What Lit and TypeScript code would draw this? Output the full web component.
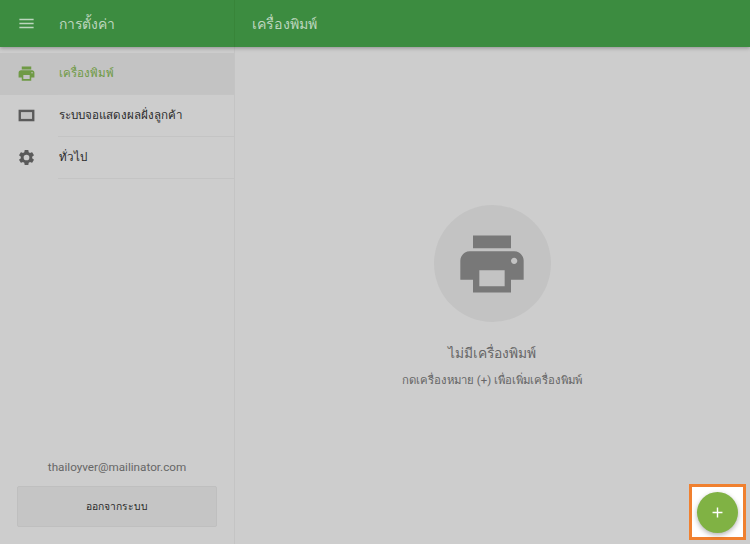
import { LitElement, html, css } from "lit";
import { customElement } from "lit/decorators.js";

const printer = "M19 8H5c-1.66 0-3 1.34-3 3v6h4v4h12v-4h4v-6c0-1.66-1.34-3-3-3zm-3 11H8v-5h8v5zm3-7c-.55 0-1-.45-1-1s.45-1 1-1 1 .45 1 1-.45 1-1 1zm-1-9H6v4h12V3z";
const gear = "M19.14 12.94c.04-.3.06-.61.06-.94s-.02-.64-.07-.94l2.03-1.58a.49.49 0 0 0 .12-.61l-1.92-3.32a.49.49 0 0 0-.59-.22l-2.39.96a7.03 7.03 0 0 0-1.62-.94l-.36-2.54a.48.48 0 0 0-.48-.41h-3.84a.48.48 0 0 0-.47.41l-.36 2.54c-.59.24-1.13.57-1.62.94l-2.39-.96a.48.48 0 0 0-.59.22L2.74 8.87a.47.47 0 0 0 .12.61l2.03 1.58c-.05.3-.09.63-.09.94s.02.64.07.94l-2.03 1.58a.49.49 0 0 0-.12.61l1.92 3.32c.12.22.37.29.59.22l2.39-.96c.5.38 1.03.7 1.62.94l.36 2.54c.05.24.24.41.48.41h3.84c.24 0 .44-.17.47-.41l.36-2.54c.59-.24 1.13-.56 1.62-.94l2.39.96c.22.08.47 0 .59-.22l1.92-3.32a.47.47 0 0 0-.12-.61l-2.01-1.58zM12 15.6A3.6 3.6 0 1 1 12 8.4a3.6 3.6 0 0 1 0 7.2z";

@customElement("app-root")
export class AppRoot extends LitElement {
  static styles = css`
    :host { display: flex; flex-direction: column; width: 750px; height: 544px; overflow: hidden; position: relative;
      background: #cdcdcd; font-family: Roboto, "Noto Sans", "Liberation Sans", sans-serif; color: #222; }
    header { flex: none; height: 47px; display: flex; background: #3c8c40; color: #bcd6be; font-size: 14.2px;
      box-shadow: 0 1px 4px rgba(0,0,0,.3); position: relative; z-index: 1; }
    .hleft { width: 234px; display: flex; align-items: center; border-right: 1px solid #388539; font-size: 13.9px; }
    .burger { width: 59px; display: flex; justify-content: center; padding-right: 6px; box-sizing: border-box; }
    .hright { padding-left: 17px; display: flex; align-items: center; }
    .body { flex: 1; display: flex; min-height: 0; }
    aside { width: 234px; border-right: 1px solid #c4c4c4; display: flex; flex-direction: column; padding-top: 6px; }
    .item { height: 42px; display: flex; align-items: stretch; font-size: 11.6px; color: #2a2a2a; }
    .item.active { background: #c3c3c3; color: #6f9a45; }
    .ico { width: 58px; flex: none; display: flex; align-items: center; justify-content: center; padding: 0 6px 2px 0; box-sizing: border-box; }
    .lbl { flex: 1; display: flex; align-items: center; padding: 0 0 1px 1px; box-sizing: border-box; border-bottom: 1px solid #c4c4c4; }
    .foot { margin-top: auto; padding: 0 17px 17px; display: flex; flex-direction: column; align-items: center; }
    .email { font-size: 11.7px; color: #666; margin-bottom: 12px; }
    .logout { width: 200px; height: 41px; box-sizing: border-box; border: 1px solid #bfbfbf; border-radius: 2px; background: #c5c5c5;
      display: flex; align-items: center; justify-content: center; font-size: 10.3px; color: #2a2a2a; }
    main { flex: 1; display: flex; flex-direction: column; align-items: center; padding: 158px 1px 0 0; }
    .circle { width: 117px; height: 117px; border-radius: 50%; background: #c3c3c3; display: flex; align-items: center; justify-content: center; }
    .t1 { font-size: 13.8px; color: #666; margin-top: 20px; }
    .t2 { font-size: 11.35px; color: #666; margin-top: 7px; }
    .hl { position: absolute; left: 689px; top: 484px; width: 57px; height: 56px; box-sizing: border-box; border: 3px solid #f0802f; background: #fff;
      display: flex; align-items: center; justify-content: center; }
    .fab { width: 41px; height: 41px; border-radius: 50%; background: #80b244; color: #fff; box-shadow: 0 2px 5px rgba(0,0,0,.3);
      display: flex; align-items: center; justify-content: center; }
    svg { display: block; }
  `;
  private icon(d: string, size: number, fill: string) {
    return html`<svg width=${size} height=${size} viewBox="0 0 24 24" fill=${fill}><path d=${d}></path></svg>`;
  }
  render() {
    return html`
      <header>
        <div class="hleft">
          <div class="burger"><svg width="19" height="19" viewBox="0 0 24 24" fill="#bcd6be"><path d="M3 18h18v-2H3v2zm0-5h18v-2H3v2zm0-7v2h18V6H3z"></path></svg></div>
          <span>การตั้งค่า</span>
        </div>
        <div class="hright">เครื่องพิมพ์</div>
      </header>
      <div class="body">
        <aside>
          <div class="item active"><div class="ico">${this.icon(printer, 19, "#6f9a45")}</div><div class="lbl">เครื่องพิมพ์</div></div>
          <div class="item"><div class="ico"><svg width="19" height="19" viewBox="0 0 24 24"><rect x="2" y="4.7" width="20" height="14.6" fill="#5a5a5a"></rect><rect x="5" y="7.7" width="14" height="8.6" fill="#c1c1c1"></rect></svg></div><div class="lbl">ระบบจอแสดงผลฝั่งลูกค้า</div></div>
          <div class="item"><div class="ico">${this.icon(gear, 19, "#5a5a5a")}</div><div class="lbl">ทั่วไป</div></div>
          <div class="foot">
            <div class="email">thailoyver@mailinator.com</div>
            <div class="logout">ออกจากระบบ</div>
          </div>
        </aside>
        <main>
          <div class="circle">${this.icon(printer, 76, "#787878")}</div>
          <div class="t1">ไม่มีเครื่องพิมพ์</div>
          <div class="t2">กดเครื่องหมาย (+) เพื่อเพิ่มเครื่องพิมพ์</div>
        </main>
      </div>
      <div class="hl"><div class="fab"><svg width="17" height="17" viewBox="0 0 24 24" fill="#fff"><path d="M19 13h-6v6h-2v-6H5v-2h6V5h2v6h6v2z"></path></svg></div></div>
    `;
  }
}
